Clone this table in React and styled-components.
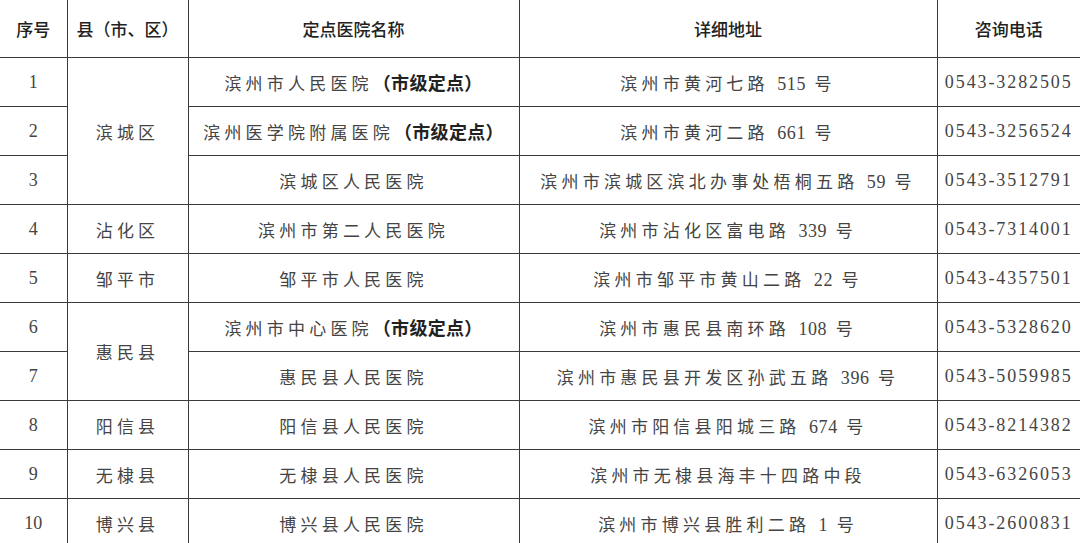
import styled, { createGlobalStyle } from 'styled-components';

const GlobalStyle = createGlobalStyle`
  html, body {
    margin: 0;
    padding: 0;
    background: #fff;
  }
  body {
    width: 1080px;
    height: 543px;
    overflow: hidden;
  }
`;

const Table = styled.table`
  width: 1080px;
  table-layout: fixed;
  border-collapse: collapse;
  font-family: 'Liberation Serif', 'Noto Sans CJK SC', serif;
  color: #444;
`;

const HeadCell = styled.th`
  height: 57px;
  padding: 0;
  font-family: 'Noto Sans CJK SC', sans-serif;
  font-size: 17px;
  font-weight: 500;
  color: #222;
  text-align: center;
  vertical-align: middle;
  border: 1px solid #3a3a3a;
  border-top: none;

  &:first-child {
    border-left: none;
  }
  &:last-child {
    border-right: none;
  }
`;

const Cell = styled.td`
  height: 48px;
  padding: 0;
  font-size: ${(props) => (props.$phone ? '18px' : '17px')};
  letter-spacing: ${(props) => (props.$phone ? '1.9px' : '4.2px')};
  text-align: center;
  vertical-align: middle;
  white-space: nowrap;
  border: 1px solid #3a3a3a;

  &:first-child {
    border-left: none;
    font-size: 18px;
    letter-spacing: 0;
  }
  &:last-child {
    border-right: none;
  }
`;

const Num = styled.span`
  font-size: 18px;
  letter-spacing: 0.6px;
`;

const Level = styled.b`
  font-family: 'Noto Sans CJK SC', sans-serif;
  font-size: 18px;
  font-weight: 700;
  letter-spacing: 0.3px;
  color: #222;
`;

const rows = [
  { no: 1, county: '滨城区', span: 3, name: '滨州市人民医院', city: true, addr: '滨州市黄河七路 515 号', tel: '0543-3282505' },
  { no: 2, name: '滨州医学院附属医院', city: true, addr: '滨州市黄河二路 661 号', tel: '0543-3256524' },
  { no: 3, name: '滨城区人民医院', addr: '滨州市滨城区滨北办事处梧桐五路 59 号', tel: '0543-3512791' },
  { no: 4, county: '沾化区', span: 1, name: '滨州市第二人民医院', addr: '滨州市沾化区富电路 339 号', tel: '0543-7314001' },
  { no: 5, county: '邹平市', span: 1, name: '邹平市人民医院', addr: '滨州市邹平市黄山二路 22 号', tel: '0543-4357501' },
  { no: 6, county: '惠民县', span: 2, name: '滨州市中心医院', city: true, addr: '滨州市惠民县南环路 108 号', tel: '0543-5328620' },
  { no: 7, name: '惠民县人民医院', addr: '滨州市惠民县开发区孙武五路 396 号', tel: '0543-5059985' },
  { no: 8, county: '阳信县', span: 1, name: '阳信县人民医院', addr: '滨州市阳信县阳城三路 674 号', tel: '0543-8214382' },
  { no: 9, county: '无棣县', span: 1, name: '无棣县人民医院', addr: '滨州市无棣县海丰十四路中段', tel: '0543-6326053' },
  { no: 10, county: '博兴县', span: 1, name: '博兴县人民医院', addr: '滨州市博兴县胜利二路 1 号', tel: '0543-2600831' },
];

// keep house numbers tight, like the source document
const Address = ({ text }) =>
  text.split(/(\d+)/).map((part, i) =>
    /^\d+$/.test(part) ? <Num key={i}>{part}</Num> : part
  );

export default function App() {
  return (
    <>
      <GlobalStyle />
      <Table>
        <colgroup>
          <col style={{ width: 67 }} />
          <col style={{ width: 121 }} />
          <col style={{ width: 331 }} />
          <col style={{ width: 418 }} />
          <col style={{ width: 143 }} />
        </colgroup>
        <thead>
          <tr>
            <HeadCell>序号</HeadCell>
            <HeadCell>县（市、区）</HeadCell>
            <HeadCell>定点医院名称</HeadCell>
            <HeadCell>详细地址</HeadCell>
            <HeadCell>咨询电话</HeadCell>
          </tr>
        </thead>
        <tbody>
          {rows.map((r) => (
            <tr key={r.no}>
              <Cell>{r.no}</Cell>
              {r.county && <Cell rowSpan={r.span}>{r.county}</Cell>}
              <Cell>
                {r.name}
                {r.city && <Level>（市级定点）</Level>}
              </Cell>
              <Cell>
                <Address text={r.addr} />
              </Cell>
              <Cell $phone>{r.tel}</Cell>
            </tr>
          ))}
        </tbody>
      </Table>
    </>
  );
}
